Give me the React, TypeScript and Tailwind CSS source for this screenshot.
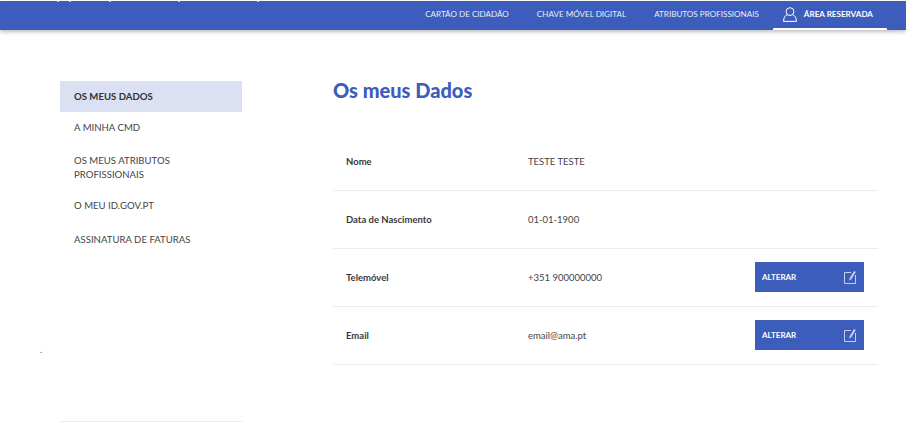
import React from 'react';

const navLinks = ['CARTÃO DE CIDADÃO', 'CHAVE MÓVEL DIGITAL', 'ATRIBUTOS PROFISSIONAIS'];

const sideLinks = [
  { label: 'A MINHA CMD', cls: 'h-[32px] mt-0' },
  { label: 'OS MEUS ATRIBUTOS PROFISSIONAIS', cls: 'h-[46px] mt-[1px]' },
  { label: 'O MEU ID.GOV.PT', cls: 'h-[32px] -mt-[1px]' },
  { label: 'ASSINATURA DE FATURAS', cls: 'h-[32px] mt-[2px]' },
];

const rows = [
  { label: 'Nome', value: 'TESTE TESTE', editable: false },
  { label: 'Data de Nascimento', value: '01-01-1900', editable: false },
  { label: 'Telemóvel', value: '+351 900000000', editable: true },
  { label: 'Email', value: 'email@ama.pt', editable: true },
];

// leftovers of the scrolled-away top bar text
const topMarks = ['left-[57px]', 'left-[69px]', 'left-[109px]', 'left-[178px]', 'left-[257px]'];

function UserIcon() {
  return (
    <svg width="14" height="15" viewBox="0 0 14 15" fill="none" stroke="currentColor" strokeWidth="1">
      <circle cx="7" cy="4.6" r="3.9" />
      <path d="M4.2 7.8 C2 8.6 .7 10.4 .5 14.4 H13.5 C13.3 10.4 12 8.6 9.8 7.8" />
    </svg>
  );
}

function EditIcon() {
  return (
    <svg width="12" height="14" viewBox="0 0 12 14" fill="none" className="text-[#c3cfef]">
      <path d="M7 2.5 H.5 V13.5 H11.5 V5" stroke="currentColor" />
      <path d="M5.5 8.5 L10 1 L11.8 2.1 L7.2 9.6 L5.2 10.4 Z" fill="currentColor" />
    </svg>
  );
}

export default function App() {
  return (
    <div className="relative h-[422px] w-[906px] overflow-hidden bg-white font-['Lato','Open_Sans',sans-serif] text-[#333]">
      <header className="mt-[1px] flex h-[29px] items-center justify-end bg-[#3c5dbc] pr-[33px] pb-[2px] text-[8.1px] text-[#e8ecf8] shadow-[0_2px_4px_rgba(0,0,0,0.25)]">
        {navLinks.map((link) => (
          <span key={link} className="mr-[28px] whitespace-nowrap">
            {link}
          </span>
        ))}
        <div className="-ml-[4px] flex items-center gap-[7px] whitespace-nowrap font-bold text-white">
          <UserIcon />
          ÁREA RESERVADA
        </div>
      </header>
      {topMarks.map((left) => (
        <div key={left} className={`absolute top-[1px] h-[1px] w-[2px] bg-[#b9c6ea] ${left}`} />
      ))}
      <div className="absolute top-[28px] left-[773px] h-[2px] w-[114px] rounded-t-[1px] bg-white" />
      <div className="flex pt-[51px] pl-[60px]">
        <aside className="w-[182px] text-[9.6px] text-[#444]">
          <div className="flex h-[31px] items-center bg-[#dbe1f2] pt-[1px] pl-[14px] font-bold text-[#333]">OS MEUS DADOS</div>
          {sideLinks.map((link) => (
            <div key={link.label} className={`flex items-center pr-[40px] pl-[14px] leading-[14px] ${link.cls}`}>
              {link.label}
            </div>
          ))}
        </aside>
        <main className="ml-[91px] w-[545px]">
          <h1 className="mt-[-3px] h-[55px] text-[20px] leading-[24px] font-black text-[#3c5dbc]">Os meus Dados</h1>
          {rows.map((row) => (
            <div key={row.label} className="flex h-[58px] items-center border-b border-[#ececec] pr-[14px] pl-[13px] text-[9.5px]">
              <span className="w-[182px] pt-[2px] font-bold text-[#3a3a3a]">{row.label}</span>
              <span className="flex-1 pt-[2px] text-[#444]">{row.value}</span>
              {row.editable && (
                <button className="-mt-[2px] flex h-[30px] w-[109px] items-center justify-between bg-[#3c5dbc] pr-[8px] pl-[7px] text-[8px] font-bold text-white">
                  ALTERAR
                  <EditIcon />
                </button>
              )}
            </div>
          ))}
        </main>
      </div>
      <span className="absolute top-[344px] left-[40px] text-[9px] leading-[12px] text-[#555]">.</span>
      <div className="absolute top-[421px] left-[60px] h-[1px] w-[182px] bg-[#ececec]" />
    </div>
  );
}
